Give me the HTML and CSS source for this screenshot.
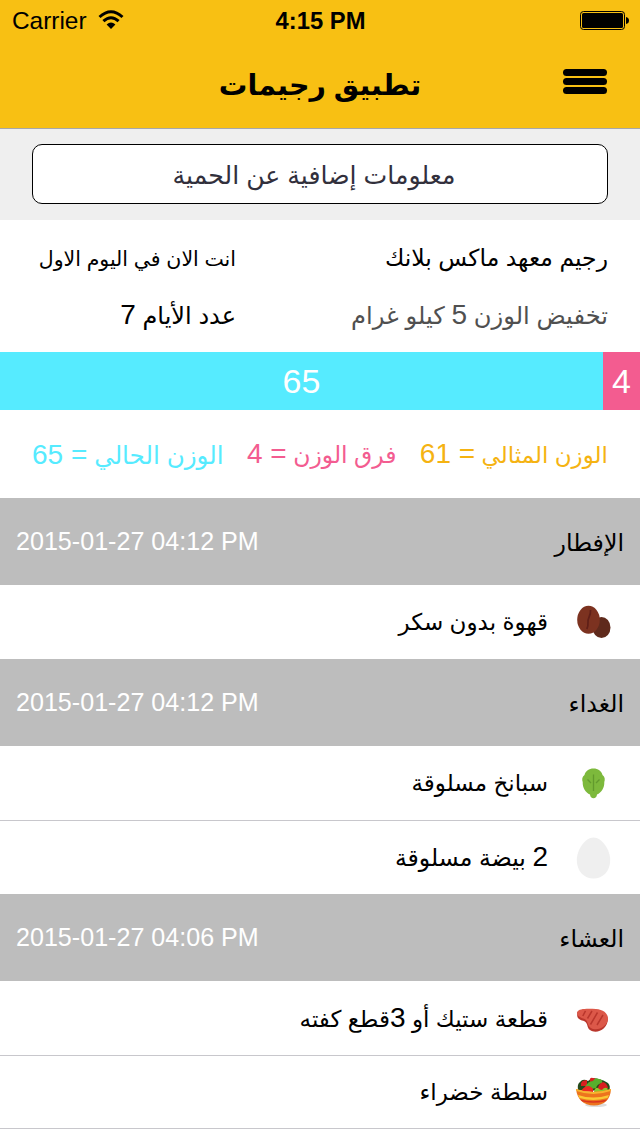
FILE: index.html
```html
<!DOCTYPE html>
<html lang="ar" dir="rtl">
<head>
  <meta charset="UTF-8">
  <meta name="viewport" content="width=device-width, initial-scale=1.0">
  <title>تطبيق رجيمات</title>
  <link rel="stylesheet" href="styles.css">
</head>
<body>
  <header class="header">
    <div class="status-bar" dir="ltr">
      <div class="carrier">
        <span>Carrier</span>
        <svg class="wifi" width="26" height="20" viewBox="0 0 26 20">
          <path d="M1.5 7 Q13 -3.4 24.5 7" fill="none" stroke="#000" stroke-width="3"/>
          <path d="M5.4 11.2 Q13 4.4 20.6 11.2" fill="none" stroke="#000" stroke-width="3"/>
          <path d="M8.6 14.6 Q13 10.6 17.4 14.6 L13 19 Z"/>
        </svg>
      </div>
      <span class="clock">4:15 PM</span>
      <svg class="battery" width="49" height="19" viewBox="0 0 49 19">
        <rect x="0.5" y="0.5" width="44" height="18" rx="3" fill="none" stroke="#000"/>
        <rect x="2" y="2" width="41" height="15" rx="1.5"/>
        <path d="M46 6 Q49 6.5 49 9.5 Q49 12.5 46 13 Z"/>
      </svg>
    </div>
    <div class="nav">
      <button class="menu" aria-label="القائمة">
        <span></span>
        <span></span>
        <span></span>
      </button>
      <h1>تطبيق رجيمات</h1>
    </div>
  </header>

  <div class="info">
    <button class="info-btn">معلومات إضافية عن الحمية</button>
  </div>

  <section class="summary">
    <div class="plan">
      <p class="plan-name">رجيم معهد ماكس بلانك</p>
      <p class="plan-goal">تخفيض الوزن <span class="num">5</span> كيلو غرام</p>
    </div>
    <div class="days">
      <p class="today">انت الان في اليوم الاول</p>
      <p class="total">عدد الأيام <span class="num">7</span></p>
    </div>
  </section>

  <div class="weight-bar">
    <div class="diff">4</div>
    <div class="current">65</div>
  </div>

  <div class="legend">
    <span class="ideal-text">الوزن المثالي <span class="num">= 61</span></span>
    <span class="diff-text">فرق الوزن <span class="num">= 4</span></span>
    <span class="current-text">الوزن الحالي <span class="num">= 65</span></span>
  </div>

  <section class="meal">
    <div class="meal-header">
      <h2>الإفطار</h2>
      <time dir="ltr">2015-01-27 04:12 PM</time>
    </div>
    <ul>
      <li>
        <svg class="icon" viewBox="0 0 44 44">
          <ellipse cx="31.5" cy="27.5" rx="9" ry="10.5" fill="#5f2a1c"/>
          <ellipse cx="18.5" cy="19.8" rx="11.3" ry="14" fill="#7c3220"/>
          <path d="M20.5 10 C21 16 17.5 18 18 22 Q18.3 26 16.8 29" fill="none" stroke="#5f1f18" stroke-width="1.7"/>
        </svg>
        <span class="food">قهوة بدون سكر</span>
      </li>
    </ul>
  </section>

  <section class="meal">
    <div class="meal-header">
      <h2>الغداء</h2>
      <time dir="ltr">2015-01-27 04:12 PM</time>
    </div>
    <ul>
      <li>
        <svg class="icon" viewBox="0 0 44 44">
          <path d="M23.5 7.5 C19 7.5 15.5 10 14.5 14 C12 16 11.8 18.5 12.7 21 C12.5 27 15.5 31.5 20 33.5 C20.3 36 21.5 37.3 23.5 37.3 C25.5 37.3 26.7 36 27 33.5 C31.5 31.5 34.5 27 34.3 21 C35.2 18.5 35 16 32.5 14 C31.5 10 28 7.5 23.5 7.5 Z" fill="#7db93c"/>
          <path d="M23.5 13.5 V30 M17.5 18.500 L21 22 M29.500 18.500 L26 22" fill="none" stroke="#629a2d" stroke-width="1.3"/>
        </svg>
        <span class="food">سبانخ مسلوقة</span>
      </li>
      <li>
        <svg class="icon" viewBox="0 0 44 44">
          <path d="M23.5 1.5 C32 1.5 40.2 14 40.2 24 C40.2 35 33 42.5 23.5 42.5 C14 42.5 6.8 35 6.8 24 C6.8 14 15 1.5 23.5 1.5 Z" fill="#efefef"/>
        </svg>
        <span class="food egg"><span class="num">2</span> بيضة مسلوقة</span>
      </li>
    </ul>
  </section>

  <section class="meal">
    <div class="meal-header">
      <h2>العشاء</h2>
      <time dir="ltr">2015-01-27 04:06 PM</time>
    </div>
    <ul>
      <li>
        <svg class="icon" viewBox="0 0 44 44">
          <path d="M7.2 16 V20 C8 24.5 13 24 15.5 26 C18 28.5 17 32 20 34 C26 38.5 38 34 38 22 Z" fill="#b9362c"/>
          <path d="M7.3 16 C8.5 12.5 17 12.5 26 13 C33 13.4 38.2 17.500 38 22.500 C37.500 31 27 36 20.500 31.800 C17 29.500 18.500 24.500 14 22.800 C10 21.500 6.500 20 7.300 16 Z" fill="#dc5849"/>
          <path d="M15.500 14.800 L12.800 20 M22 15 L17.500 22.500 M27.500 16.500 L20.500 28.500 M33 19 L27 29" fill="none" stroke="#b9362c" stroke-width="1.5"/>
        </svg>
        <span class="food">قطعة ستيك أو <span class="num">3</span>قطع كفته</span>
      </li>
      <li>
        <svg class="icon" viewBox="0 0 44 44">
          <ellipse cx="26" cy="35" rx="11" ry="2" fill="#ddd"/>
          <path d="M8 20 Q7 14 10 12 Q13 8 18 11 Q22 7 28 9 Q34 10 38 13 Q41 16 39 21 Z" fill="#244a1b"/>
          <path d="M11 16 Q10 10 17 10 L17 16 Z" fill="#d91f20"/>
          <path d="M20 12 Q19 7 23 8 Q26 8 27 11 Z" fill="#d91f20"/>
          <path d="M15 17 Q18 11 23 11 Q25 7 29 9 Q33 9 32 13 Q27 14 26 18 L17 20 Z" fill="#57ae2d"/>
          <path d="M28 19 Q28 14 33 12 Q37 13 38 18 L33 21 Z" fill="#d91f20"/>
          <path d="M11 21 Q16 14 21 17 Q24 19 23 22 Z" fill="#ec2822"/>
          <path d="M24 22 Q25 17 28 18 Q30 20 32 20 Q35 16 38 19 L36 22 Z" fill="#91c52b"/>
          <path d="M6 19 Q23 25 41 19 Q40 35 24 35.5 Q8 35 6 19 Z" fill="#ed741d"/>
          <path d="M6 19 Q23 25 41 19 L40.5 21 Q23 27 6.5 21 Z" fill="#f7b52f"/>
          <path d="M8 25 Q23 30 39 25 L37.5 28 Q23 32 9.5 28 Z" fill="#fbc935"/>
          <path d="M10 29.5 Q23 33 37 29.5 L35 31.5 Q23 34 12.5 31.5 Z" fill="#d93420"/>
        </svg>
        <span class="food">سلطة خضراء</span>
      </li>
    </ul>
  </section>
</body>
</html>
```
FILE: styles.css
```css
* {
  box-sizing: border-box;
}
body {
  margin: 0;
  font-family: "Liberation Sans", "DejaVu Sans", sans-serif;
  font-size: 23.5px;
  color: #000;
  background: #fff;
}
h1, h2, p, ul {
  margin: 0;
  padding: 0;
}
.num {
  font-size: 28px;
  line-height: 1;
}

/* Header */
.header {
  height: 129px;
  background: #f8c013;
  border-bottom: 1px solid #a7a7aa;
}
.status-bar {
  display: grid;
  grid-template-columns: 1fr auto 1fr;
  align-items: center;
  height: 41px;
  padding: 0 11px 0 12px;
  font-size: 24.4px;
}
.carrier {
  display: flex;
  align-items: center;
  gap: 11px;
}
.wifi, .battery {
  margin-bottom: 1px;
}
.clock {
  font-size: 23.8px;
  font-weight: bold;
}
.battery {
  justify-self: end;
}
.nav {
  display: grid;
  grid-template-columns: 44px 1fr 44px;
  align-items: center;
  height: 87px;
  padding: 0 33px;
}
.menu {
  display: flex;
  flex-direction: column;
  gap: 2px;
  padding: 0;
  margin-bottom: 7px;
  border: none;
  background: none;
}
.menu span {
  width: 44px;
  height: 7px;
  border-radius: 4px;
  background: #000;
}
h1 {
  padding-top: 2px;
  text-align: center;
  font-size: 28.5px;
  font-weight: bold;
}

/* Diet info button */
.info {
  height: 91px;
  padding: 15px 32px 16px;
  background: #efefef;
}
.info-btn {
  width: 100%;
  height: 60px;
  padding: 2px 12px 0 0;
  border: 1px solid #000;
  border-radius: 10px;
  background: #fff;
  color: #32303c;
  font-family: inherit;
  font-size: 25.2px;
}

/* Plan summary */
.summary {
  display: grid;
  grid-template-columns: 372px 1fr;
  height: 132px;
  padding: 10px 32px;
  line-height: 57px;
  white-space: nowrap;
}
.summary p {
  height: 57px;
}
.plan-goal {
  color: #505050;
  font-size: 24.2px;
}
.today {
  font-size: 20.5px;
}
.total {
  font-size: 24px;
}

/* Weight bar */
.weight-bar {
  display: flex;
  height: 58px;
  line-height: 58px;
  color: #fff;
  font-size: 34px;
  text-align: center;
}
.diff {
  width: 37px;
  background: #f35c90;
}
.current {
  flex: 1;
  background: #56ebff;
}
.legend {
  display: flex;
  justify-content: space-between;
  height: 88px;
  padding: 0 32px;
  line-height: 91px;
  white-space: nowrap;
}
.ideal-text {
  color: #f5b312;
  font-size: 23px;
}
.diff-text {
  color: #f35c90;
}
.current-text {
  color: #56ebff;
  font-size: 24.6px;
}

/* Meals */
.meal-header {
  display: flex;
  align-items: center;
  justify-content: space-between;
  height: 87px;
  padding: 0 16px;
  background: #bdbdbd;
}
.meal-header h2 {
  padding-top: 2px;
  font-size: 23.7px;
  font-weight: normal;
}
.meal-header time {
  color: #fff;
  font-size: 25.1px;
}
.meal ul {
  list-style: none;
}
.meal li {
  display: flex;
  align-items: center;
  gap: 22px;
  height: 74px;
  padding: 0 26px;
}
.meal li + li {
  border-top: 1px solid #c8c7cc;
}
.meal:last-child li:last-child {
  border-bottom: 1px solid #c8c7cc;
}
.icon {
  width: 44px;
  height: 44px;
}
.food {
  padding-top: 1px;
  font-size: 23px;
}
.egg {
  padding-top: 0;
  font-size: 23.6px;
}
```
